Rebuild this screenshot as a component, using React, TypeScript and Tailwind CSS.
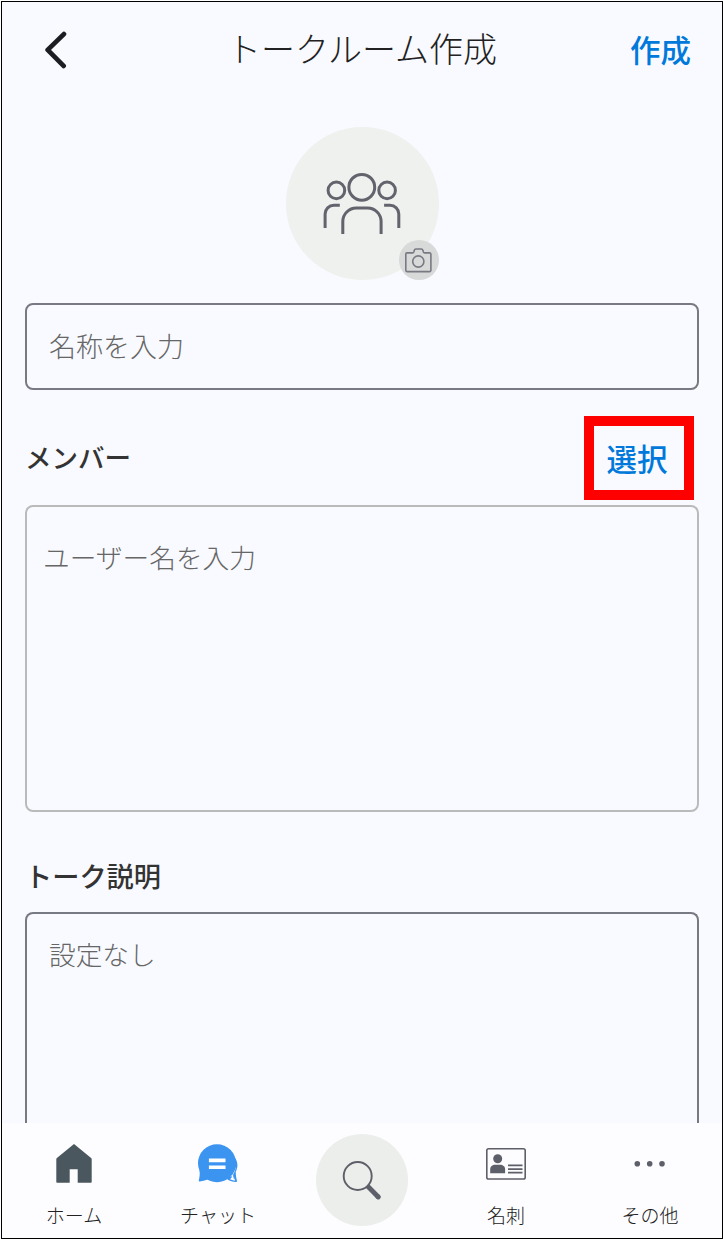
import type { ReactNode } from 'react';

function BackIcon() {
  return (
    <svg width="24" height="40" viewBox="0 0 24 40" fill="none" stroke="#1b1d22" strokeWidth="4.8" strokeLinecap="round" strokeLinejoin="round">
      <path d="M20.9 4.1 4.7 19.9l15.9 16" />
    </svg>
  );
}

function GroupIcon() {
  return (
    <svg width="78" height="62" viewBox="0.2 0 78 62" fill="none" stroke="#62636c" strokeWidth="3">
      <circle cx="39" cy="15.3" r="12.9" />
      <circle cx="13.6" cy="18.4" r="8.3" />
      <circle cx="64.3" cy="18.4" r="8.3" />
      <path d="M20 62V49.5A13.5 13.5 0 0 1 33.5 36h11.3a13.5 13.5 0 0 1 13.5 13.5V62" />
      <path d="M17 33.3H11a8.7 8.7 0 0 0-8.7 8.7v14M61.3 33.3h6A8.7 8.7 0 0 1 76 42v14" />
    </svg>
  );
}

function CameraIcon() {
  return (
    <svg width="27" height="25" viewBox="0 0 27 25" fill="none" stroke="#777a82" strokeWidth="1.6" strokeLinejoin="round">
      <path d="M2 4.9h5.6c.8 0 1.1-.3 1.3-1l.4-1.6c.2-.9.7-1.3 1.6-1.3h5.4c.9 0 1.4.4 1.6 1.3l.4 1.6c.2.7.5 1 1.3 1h5a1.3 1.3 0 0 1 1.3 1.3v16.1a1.3 1.3 0 0 1-1.3 1.3H2A1.3 1.3 0 0 1 .8 22.3V6.2A1.3 1.3 0 0 1 2 4.9Z" />
      <circle cx="13.3" cy="13.5" r="5.6" />
    </svg>
  );
}

function HomeIcon() {
  return (
    <svg width="40" height="40" viewBox="0 1 40 40" fill="#4b575e">
      <path d="M20 1 2.9 15.1c-.4.3-.6.7-.6 1.2v22.4c0 .6.4 1 1 1h12.4V26.3h8v13.4h13c.6 0 1-.4 1-1V16.3c0-.5-.2-.9-.6-1.2Z" />
    </svg>
  );
}

function ChatIcon() {
  return (
    <svg width="40" height="40" viewBox="0 0 40 40">
      <path d="M36.500 13c3.300 4.500 3.900 9.500 1.300 14.500-.2 3.200.4 6 1.200 9.400.2.900-.2 1.200-1 1.100-3.300-.3-6-1-8.500-2.300Z" fill="#3a94f0" />
      <path d="M37.700 22c-.9 4-2.300 7.500-5.700 10.800.9-.1 1.600-.3 2.200-.7-.3 1.300-1 2.200-2.300 3.200 2.400.9 3.700 1.200 5.300 1.400-.9-2.300-1.700-4.500-1.900-6.200 1.100-2.200 2.300-5 2.400-8.500Z" fill="#fdfdff" />
      <path d="M35 29.500c.3 2 .7 3.700 1.300 5.300" fill="none" stroke="#3a94f0" strokeWidth=".8" />
      <circle cx="19" cy="19.200" r="19" fill="#3a94f0" />
      <path d="M1.400 26c.7 3.500.3 6.700-.6 10.300-.2.900.2 1.300 1 1.100 3.300-.4 6.400-1.200 9.400-2.600Z" fill="#3a94f0" />
      <path d="M10.900 14.500h16.600v3.700H10.900zM10.900 21.500h16.600v3.600H10.900z" fill="#fff" />
    </svg>
  );
}

function SearchIcon() {
  return (
    <svg width="40" height="40" viewBox="0 0 40 40" fill="none" stroke="#5d5f69">
      <circle cx="15.7" cy="16" r="14" strokeWidth="1.9" />
      <path d="m25.5 26 10.8 11" strokeWidth="4.8" />
      <path d="m35.8 36.5.5.5" strokeWidth="4.8" strokeLinecap="round" />
    </svg>
  );
}

function CardIcon() {
  return (
    <svg width="40" height="40" viewBox="0 0 40 40" fill="#5d5f69">
      <rect x=".8" y="4.8" width="38.4" height="30.2" rx="1.8" fill="none" stroke="#5d5f69" strokeWidth="1.6" />
      <circle cx="11.7" cy="14.7" r="4.5" />
      <path d="M4.200 25.300c0-3 2.300-4.600 5-4.600h4.900c2.700 0 5 1.600 5 4.600v4H4.200Z" />
      <path d="M22 21.400h14.500M22 25.100h14.500M22 28.700h14.500" stroke="#5d5f69" strokeWidth="1.8" />
    </svg>
  );
}

function MoreIcon() {
  return (
    <svg width="40" height="40" viewBox="0 0 40 40" fill="#5d5f69">
      <circle cx="7.3" cy="19.7" r="2.8" />
      <circle cx="19.7" cy="19.7" r="2.8" />
      <circle cx="32" cy="19.7" r="2.8" />
    </svg>
  );
}

function Tab({ label, children }: { label: string; children: ReactNode }) {
  return (
    <button type="button" className="flex flex-col items-center pt-[21px]">
      {children}
      <span className="mt-[17px] text-[19px] leading-7 font-light whitespace-nowrap text-[#222]">{label}</span>
    </button>
  );
}

export default function App() {
  return (
    <div className="bg-white pt-px pl-px font-['Noto_Sans_CJK_JP',sans-serif]">
      <div className="flex h-[1238px] w-[722px] flex-col border border-black bg-[#f9faff]">
        <header className="flex h-24 shrink-0 items-center justify-between pr-[31px] pl-[41px]">
          <button type="button" className="w-[51px]">
            <BackIcon />
          </button>
          <h1 className="pb-1 text-[34px] leading-none font-light text-[#222]">トークルーム作成</h1>
          <button type="button" className="pb-0.5 text-[30.5px] leading-none font-medium text-[#0079db]">作成</button>
        </header>

        <main className="flex min-h-0 flex-1 flex-col overflow-hidden px-[23px] pt-[29px]">
          <div className="relative flex size-[153px] shrink-0 justify-center self-center rounded-full bg-[#eef1ed] pt-[45px]">
            <GroupIcon />
            <span className="absolute right-0 bottom-0 flex size-10 items-center justify-center rounded-full bg-[#d8d9d9]">
              <CameraIcon />
            </span>
          </div>

          <div className="mt-[23px] flex h-[87px] shrink-0 items-center rounded-lg border-2 border-[#777a82] pl-[22px] text-[27px] font-light text-[#666]">
            名称を入力
          </div>

          <div className="mt-[26px] flex h-[84px] shrink-0 items-center justify-between pr-[5px]">
            <h2 className="pb-0.5 text-[26.5px] leading-none font-medium text-[#333]">メンバー</h2>
            <button type="button" className="flex h-[84px] w-[110px] items-center justify-center border-[10px] border-[#ff0000] pr-1 text-[30.5px] leading-none font-medium text-[#0079db]">
              選択
            </button>
          </div>
          <div className="mt-[5px] h-[307px] shrink-0 rounded-lg border-2 border-[#b9bab9] pt-[30px] pl-4 text-[26.7px] font-light text-[#666]">
            ユーザー名を入力
          </div>

          <h2 className="mt-[50px] shrink-0 text-[27.2px] leading-[27px] font-medium text-[#333]">トーク説明</h2>
          <div className="mt-[23px] min-h-0 flex-1 rounded-t-lg border-2 border-b-0 border-[#777a82] pt-5 pl-[22px] text-[26.7px] font-light text-[#666]">
            設定なし
          </div>
        </main>

        <nav className="grid h-[115px] shrink-0 grid-cols-5 bg-[#fdfdff]">
          <Tab label="ホーム">
            <HomeIcon />
          </Tab>
          <Tab label="チャット">
            <ChatIcon />
          </Tab>
          <button type="button" className="mt-[11px] flex size-[92px] items-center justify-center justify-self-center rounded-full bg-[#ebeeea]">
            <SearchIcon />
          </button>
          <Tab label="名刺">
            <CardIcon />
          </Tab>
          <Tab label="その他">
            <MoreIcon />
          </Tab>
        </nav>
      </div>
    </div>
  );
}
